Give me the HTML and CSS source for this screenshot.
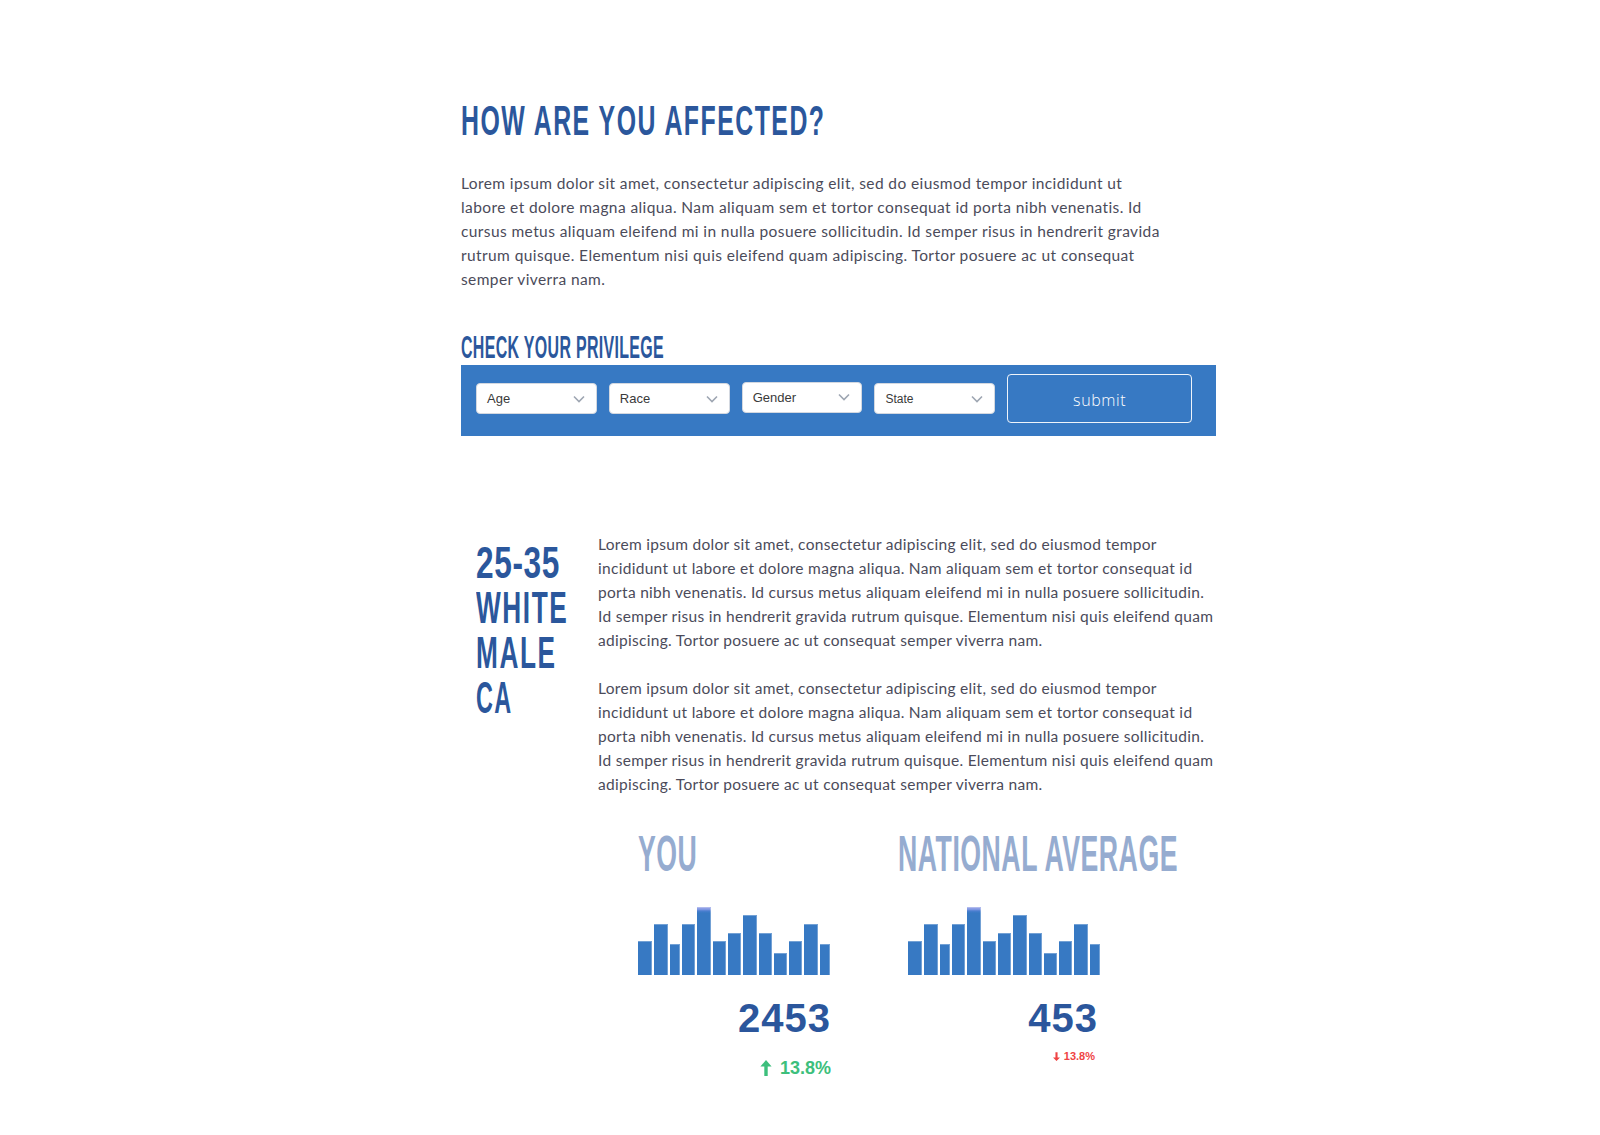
FILE: index.html
```html
<!DOCTYPE html>
<html lang="en">
<head>
<meta charset="utf-8">
<title>How are you affected?</title>
<link rel="stylesheet" href="styles.css">
</head>
<body>
<div class="page">
  <h1 class="title"><span class="cond cond-title">HOW ARE YOU AFFECTED?</span></h1>
  <p class="intro">Lorem ipsum dolor sit amet, consectetur adipiscing elit, sed do eiusmod tempor incididunt ut labore et dolore magna aliqua. Nam aliquam sem et tortor consequat id porta nibh venenatis. Id cursus metus aliquam eleifend mi in nulla posuere sollicitudin. Id semper risus in hendrerit gravida rutrum quisque. Elementum nisi quis eleifend quam adipiscing. Tortor posuere ac ut consequat semper viverra nam.</p>

  <h2 class="form-title"><span class="cond cond-form">CHECK YOUR PRIVILEGE</span></h2>
  <div class="filter-bar">
    <div class="select"><span>Age</span><svg class="chev" viewBox="0 0 12 8"><polyline points="1,1.5 6,6.5 11,1.5"/></svg></div>
    <div class="select"><span>Race</span><svg class="chev" viewBox="0 0 12 8"><polyline points="1,1.5 6,6.5 11,1.5"/></svg></div>
    <div class="select select-raised"><span>Gender</span><svg class="chev" viewBox="0 0 12 8"><polyline points="1,1.5 6,6.5 11,1.5"/></svg></div>
    <div class="select select-small"><span>State</span><svg class="chev" viewBox="0 0 12 8"><polyline points="1,1.5 6,6.5 11,1.5"/></svg></div>
    <div class="submit">submit</div>
  </div>

  <section class="result">
    <div class="profile">
      <div class="profile-line"><span class="cond p-num">25-35</span></div>
      <div class="profile-line"><span class="cond p-word">WHITE</span></div>
      <div class="profile-line"><span class="cond p-word">MALE</span></div>
      <div class="profile-line"><span class="cond p-short">CA</span></div>
    </div>
    <div class="result-body">
      <p class="body-text">Lorem ipsum dolor sit amet, consectetur adipiscing elit, sed do eiusmod tempor incididunt ut labore et dolore magna aliqua. Nam aliquam sem et tortor consequat id porta nibh venenatis. Id cursus metus aliquam eleifend mi in nulla posuere sollicitudin. Id semper risus in hendrerit gravida rutrum quisque. Elementum nisi quis eleifend quam adipiscing. Tortor posuere ac ut consequat semper viverra nam.</p>
      <p class="body-text body-text-next">Lorem ipsum dolor sit amet, consectetur adipiscing elit, sed do eiusmod tempor incididunt ut labore et dolore magna aliqua. Nam aliquam sem et tortor consequat id porta nibh venenatis. Id cursus metus aliquam eleifend mi in nulla posuere sollicitudin. Id semper risus in hendrerit gravida rutrum quisque. Elementum nisi quis eleifend quam adipiscing. Tortor posuere ac ut consequat semper viverra nam.</p>

      <div class="stats">
        <div class="stat stat-you">
          <h3 class="stat-title"><span class="cond cond-stat">YOU</span></h3>
          <div class="stat-body">
            <div class="chart">
              <div class="bar" style="width:14px;height:34px"></div>
              <div class="bar" style="width:14px;height:51px"></div>
              <div class="bar" style="width:10px;height:31px"></div>
              <div class="bar" style="width:13px;height:51px"></div>
              <div class="bar bar-peak" style="width:14px;height:68px"></div>
              <div class="bar" style="width:13px;height:34px"></div>
              <div class="bar" style="width:13px;height:42px"></div>
              <div class="bar" style="width:14px;height:60px"></div>
              <div class="bar" style="width:13px;height:42px"></div>
              <div class="bar" style="width:13px;height:22px"></div>
              <div class="bar" style="width:13px;height:34px"></div>
              <div class="bar" style="width:14px;height:51px"></div>
              <div class="bar" style="width:10px;height:31px"></div>
            </div>
            <div class="figure">2453</div>
            <div class="delta delta-up">
              <svg class="arrow-up" viewBox="0 0 12 16"><path d="M6 0 L11.6 6.6 H7.7 V16 H4.3 V6.6 H0.4 Z"/></svg>
              <span>13.8%</span>
            </div>
          </div>
        </div>
        <div class="stat stat-nat">
          <h3 class="stat-title"><span class="cond cond-stat">NATIONAL AVERAGE</span></h3>
          <div class="stat-body">
            <div class="chart">
              <div class="bar" style="width:14px;height:34px"></div>
              <div class="bar" style="width:14px;height:51px"></div>
              <div class="bar" style="width:10px;height:31px"></div>
              <div class="bar" style="width:13px;height:51px"></div>
              <div class="bar bar-peak" style="width:14px;height:68px"></div>
              <div class="bar" style="width:13px;height:34px"></div>
              <div class="bar" style="width:13px;height:42px"></div>
              <div class="bar" style="width:14px;height:60px"></div>
              <div class="bar" style="width:13px;height:42px"></div>
              <div class="bar" style="width:13px;height:22px"></div>
              <div class="bar" style="width:13px;height:34px"></div>
              <div class="bar" style="width:14px;height:51px"></div>
              <div class="bar" style="width:10px;height:31px"></div>
            </div>
            <div class="figure">453</div>
            <div class="delta delta-down">
              <svg class="arrow-down" viewBox="0 0 8 10"><path d="M2.8 0 H5.2 V6 H8 L4 10 L0 6 H2.8 Z"/></svg>
              <span>13.8%</span>
            </div>
          </div>
        </div>
      </div>
    </div>
  </section>
</div>
</body>
</html>
```

FILE: styles.css
```css
* { box-sizing: border-box; }

html, body {
  margin: 0;
  padding: 0;
  background: #ffffff;
}

body {
  font-family: Lato, "Liberation Sans", sans-serif;
  color: #4b4b5a;
}

.page {
  width: 755px;
  margin-left: 461px;
  padding-top: 97px;
  padding-bottom: 60px;
}

/* condensed display type */
.cond {
  display: inline-block;
  font-family: "Liberation Sans", Arial, sans-serif;
  font-weight: 700;
  white-space: nowrap;
  letter-spacing: 0.06em;
  transform-origin: left center;
}

.title {
  margin: 0;
  font-size: 43px;
  line-height: 43px;
  color: #2b579c;
  font-weight: 700;
}
.cond-title { transform: scaleX(0.578); }

.intro {
  margin: 29px 0 0;
  max-width: 705px;
  font-size: 15.5px;
  line-height: 24px;
  letter-spacing: 0.4px;
}

.form-title {
  margin: 40px 0 0;
  font-size: 31px;
  line-height: 31px;
  color: #2b579c;
}
.cond-form { letter-spacing: 0.02em; transform: scaleX(0.515); }

.filter-bar {
  margin-top: 2px;
  height: 71px;
  background: #3779c3;
  display: flex;
  align-items: center;
  gap: 12px;
  padding: 9px 24px 13px 15px;
}

.select {
  width: 121px;
  height: 31px;
  background: #ffffff;
  border: 1px solid #d3d8e0;
  border-radius: 4px;
  display: flex;
  align-items: center;
  justify-content: space-between;
  padding: 0 11px 0 10px;
  font-family: "Liberation Sans", Arial, sans-serif;
  font-size: 13px;
  color: #3a3a3a;
}
.select-raised { margin-bottom: 3px; }
.select-small { font-size: 12px; }

.chev {
  width: 12px;
  height: 8px;
  fill: none;
  stroke: #9ea6b2;
  stroke-width: 1.6;
}

.submit {
  width: 185px;
  height: 49px;
  border: 1.5px solid rgba(255, 255, 255, 0.92);
  border-radius: 4px;
  display: flex;
  align-items: center;
  justify-content: center;
  color: #ffffff;
  font-family: "Open Sans", sans-serif;
  font-weight: 300;
  font-size: 16px;
  letter-spacing: 0.6px;
  padding-top: 2px;
}

.result {
  margin-top: 96px;
  display: flex;
  padding-left: 15px;
}

.profile {
  width: 122px;
  flex-shrink: 0;
  margin-top: 7px;
  font-size: 40px;
  line-height: 45px;
  color: #2b579c;
}
.profile-line { height: 45px; }
.p-num { letter-spacing: 0.02em; transform: scale(0.79, 1.125); }
.p-word { transform: scale(0.655, 1.125); }
.p-short { transform: scale(0.585, 1.125); }

.result-body {
  width: 616px;
  flex-shrink: 0;
}

.body-text {
  margin: 0;
  font-size: 15.5px;
  line-height: 24px;
  letter-spacing: 0.3px;
}
.body-text-next { margin-top: 24px; }

.stats {
  margin-top: 31px;
  display: flex;
  padding-left: 40px;
}

.stat-you { width: 260px; flex-shrink: 0; }
.stat-nat { flex: 1; min-width: 0; }

.stat-title {
  margin: 0;
  font-size: 50px;
  line-height: 50px;
  color: #96acd0;
}
.cond-stat { letter-spacing: 0.02em; transform: scaleX(0.533); }

.stat-body { width: 193px; }
.stat-nat .stat-body { width: 190px; margin-left: 10px; }

.chart {
  margin-top: 28px;
  height: 68px;
  display: flex;
  align-items: flex-end;
  gap: 2px;
}

.bar {
  flex-shrink: 0;
  background: #3779c3;
  box-shadow: inset -1px 1px 0 rgba(255, 255, 255, 0.3);
}
.bar-peak {
  background: linear-gradient(#8e9ee6 0, #8e9ee6 2px, #4a7ed0 4px, #3779c3 6px);
}

.figure {
  margin-top: 24px;
  text-align: right;
  font-family: "Liberation Sans", Arial, sans-serif;
  font-weight: 700;
  font-size: 40px;
  line-height: 39px;
  letter-spacing: 1px;
  color: #2b569c;
}

.delta {
  display: flex;
  justify-content: flex-end;
  align-items: center;
  font-family: "Liberation Sans", Arial, sans-serif;
  font-weight: 700;
}

.delta-up {
  margin-top: 21px;
  font-size: 18px;
  line-height: 18px;
  color: #3dbf7c;
  gap: 8px;
}
.arrow-up {
  width: 12px;
  height: 16px;
  fill: #3dbf7c;
}

.delta-down {
  margin-top: 13px;
  margin-right: 3px;
  font-size: 11px;
  line-height: 11px;
  color: #ef4343;
  gap: 4px;
}
.arrow-down {
  width: 7px;
  height: 9px;
  fill: #ef4343;
}
```
